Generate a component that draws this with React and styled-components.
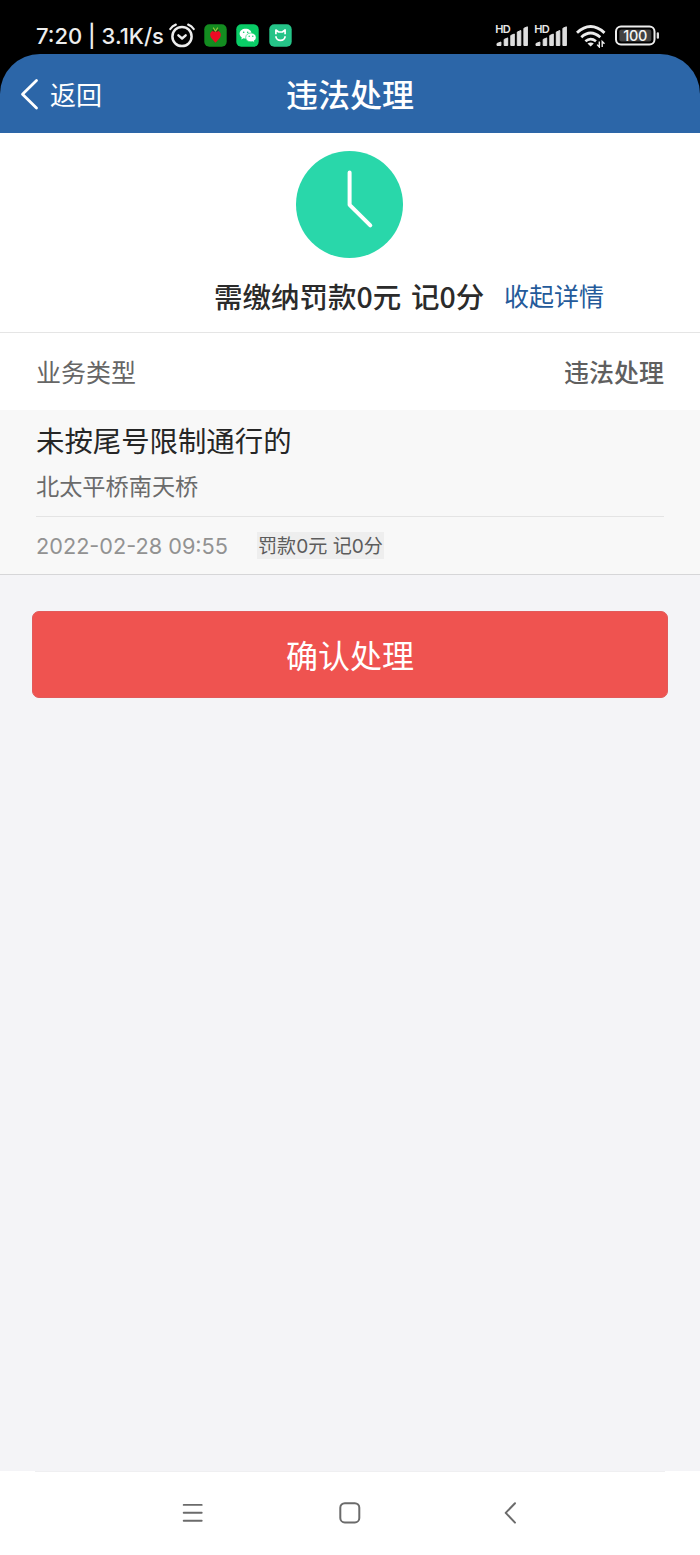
import React from 'react'
import styled, { createGlobalStyle } from 'styled-components'

const ticket = {
  title: '未按尾号限制通行的',
  address: '北太平桥南天桥',
  time: '2022-02-28 09:55',
  penalty: '罚款0元 记0分'
}

const SignalIcon = () => (
  <svg width='33' height='34' viewBox='0 -5 33 34'>
    <text x='0.2' y='9.2' fontSize='11' fontWeight='600' fill='#e8e8e8' textLength='15.4'>
      HD
    </text>
    <g fill='#dedede' stroke='#dedede' strokeWidth='1' strokeLinejoin='round'>
      <path d='M2 21.5v-2l3.9-1.5v3.500z' />
      <path d='M9.200 21.5v-6.100l3.500-1.500v7.600z' />
      <path d='M15.800 21.5v-10l3.500-1.500v11.500z' />
      <path d='M22.300 21.5v-13.500l3.500-1.500v15z' />
      <path d='M28.900 21.5v-17.200l3.500-1.500v18.700z' />
    </g>
  </svg>
)

const AlarmIcon = () => (
  <svg width='26' height='26' viewBox='0 0 26 26' fill='none' stroke='#ededed' strokeLinecap='round'>
    <circle cx='13' cy='13.5' r='9.6' strokeWidth='2.5' />
    <path d='M9.4 12.3l3.7 3.2 3.6-3.2' strokeWidth='2.4' strokeLinejoin='round' />
    <path d='M1.3 6Q3.3 2.9 6.8 1.6M24.7 6Q22.7 2.9 19.2 1.6' strokeWidth='2.2' />
  </svg>
)

const BerryIcon = () => (
  <svg width='23' height='23' viewBox='0 0 23 23'>
    <rect x='0.3' y='0.3' width='22.4' height='22.4' rx='5' fill='#138c20' />
    <path d='M11.5 6.900C8 5.800 5.800 8.500 6.200 11.600c.4 2.900 2.900 4.300 5.300 7.200 2.400-2.900 4.900-4.300 5.300-7.200.4-3.100-1.800-5.800-5.300-4.700z' fill='#ee0a24' />
    <path d='M11.5 7.600c-2.200.3-3.300-.6-3.800-2 1.6-.3 2.8.3 3.8 2zm0 0c2.2.3 3.3-.6 3.8-2-1.6-.3-2.8.3-3.8 2z' fill='#174f14' />
    <path d='M11.5 7.2L9.2 3.6M11.5 7.2l2.3-3.6' stroke='#9bc53c' strokeWidth='1.2' />
  </svg>
)

const ChatIcon = () => (
  <svg width='23' height='23' viewBox='0 0 23 23'>
    <rect x='0.3' y='0.3' width='22.4' height='22.4' rx='5' fill='#09cc66' />
    <path d='M9.6 4.7c-3.4 0-6 2.1-6 4.9 0 1.6.8 3 2.2 3.9l-.5 2 2.2-1.2c.7.2 1.3.3 2.1.3 3.4 0 6-2.2 6-5s-2.6-4.9-6-4.9z' fill='#fff' />
    <circle cx='7.7' cy='8.2' r='.8' fill='#09cc66' />
    <circle cx='11.7' cy='8.2' r='.8' fill='#09cc66' />
    <path d='M15 9c-3 0-5.3 1.9-5.3 4.4s2.3 4.4 5.3 4.4c.6 0 1.1-.1 1.6-.2l1.8 1-.4-1.7c1.3-.8 2.1-2.1 2.1-3.5C20.1 10.9 17.9 9 15 9z' fill='#fff' stroke='#09cc66' strokeWidth='.6' />
    <circle cx='13.2' cy='12.2' r='.7' fill='#09cc66' />
    <circle cx='16.8' cy='12.2' r='.7' fill='#09cc66' />
  </svg>
)

const SmartHomeIcon = () => (
  <svg width='23' height='23' viewBox='0 0 23 23' fill='none' stroke='#fff'>
    <rect x='0.3' y='0.3' width='22.4' height='22.4' rx='5' fill='#25c488' stroke='none' />
    <path d='M6.9 10.3V6l2.8 2h3.6l2.8-2v4.3' strokeWidth='1.7' strokeLinejoin='round' />
    <path d='M6.9 12.2c.1 5.6 9.1 5.6 9.2 0' strokeWidth='1.8' />
  </svg>
)

const WifiIcon = () => (
  <svg width='30' height='24' viewBox='0 0 30 24' fill='none' stroke='#ececec'>
    <path d='M1 8.8Q14.5-3.6 28.5 8.8' strokeWidth='2.9' />
    <path d='M5.3 13.2Q14.5 4.8 24.3 13.2' strokeWidth='2.8' />
    <path d='M9.4 17.2Q14.5 12.9 20 17.2' strokeWidth='2.7' />
    <path d='M11.5 19.6q3.2-2.1 6.3 0l-3.1 3z' fill='#ececec' stroke='none' />
    <path d='M23.3 17.5v5.5l-2.2-2.4M26.2 23v-5.6l2.3 2.4' strokeWidth='1.4' />
  </svg>
)

const BatteryIcon = () => (
  <svg width='45' height='22' viewBox='0 0 45 22'>
    <rect x='1' y='1.5' width='38.5' height='18' rx='5' fill='none' stroke='#ededed' strokeWidth='2' />
    <rect x='4.3' y='4.6' width='32' height='11.9' rx='2' fill='#414141' />
    <rect x='41.7' y='7.3' width='2.3' height='6.5' rx='1.1' fill='#ddd' />
    <text x='20.3' y='15.8' textAnchor='middle' fontSize='14.5' fontWeight='500' fill='#f4f4f4' textLength='24'>
      100
    </text>
  </svg>
)

const ClockIcon = () => (
  <svg width='108' height='108' viewBox='0 0 108 108'>
    <circle cx='53.5' cy='54.5' r='53.5' fill='#29d7aa' />
    <path d='M53.6 22.5v32.3l20.7 20.5' fill='none' stroke='#fff' strokeWidth='4' strokeLinecap='round' strokeLinejoin='round' />
  </svg>
)

const App = () => (
  <>
    <GlobalStyle />
    <Screen>
      <StatusBar>
        <StatusText>7:20 | 3.1K/s</StatusText>
        <AlarmIcon />
        <AppIcons>
          <BerryIcon />
          <ChatIcon />
          <SmartHomeIcon />
        </AppIcons>
        <Connectivity>
          <Signals>
            <SignalIcon />
            <SignalIcon />
          </Signals>
          <WifiIcon />
          <BatteryIcon />
        </Connectivity>
      </StatusBar>

      <Header>
        <BackButton>
          <svg width='19' height='32' viewBox='0 0 19 32' fill='none' stroke='#fff'>
            <path d='M16.5 2.5L2.5 16.2l14 13.8' strokeWidth='2.8' strokeLinecap='round' strokeLinejoin='round' />
          </svg>
          返回
        </BackButton>
        <Title>违法处理</Title>
      </Header>

      <Summary>
        <ClockIcon />
        <SummaryLine>
          <Amount>需缴纳罚款0元 记0分</Amount>
          <Toggle>收起详情</Toggle>
        </SummaryLine>
      </Summary>

      <TypeRow>
        <span>业务类型</span>
        <TypeValue>违法处理</TypeValue>
      </TypeRow>

      <Detail>
        <Offence>{ticket.title}</Offence>
        <Address>{ticket.address}</Address>
        <Meta>
          <Time>{ticket.time}</Time>
          <Tag>{ticket.penalty}</Tag>
        </Meta>
      </Detail>

      <Confirm>确认处理</Confirm>

      <NavBar>
        <svg width='22' height='22' viewBox='0 0 22 22' stroke='#6b6b6b' strokeWidth='1.9' strokeLinecap='round'>
          <path d='M1.7 2.9h18M1.7 10.8h18M1.7 18.7h18' />
        </svg>
        <svg width='22' height='22' viewBox='0 0 22 22' fill='none' stroke='#6b6b6b' strokeWidth='2'>
          <rect x='1.3' y='1.2' width='19' height='19.2' rx='4.5' />
        </svg>
        <svg width='30' height='22' viewBox='-8 0 30 22' fill='none' stroke='#6b6b6b' strokeWidth='2'>
          <path d='M11 1.2L1.7 10.9l9.3 9.7' strokeLinecap='round' strokeLinejoin='round' />
        </svg>
      </NavBar>
    </Screen>
  </>
)

export default App

const GlobalStyle = createGlobalStyle`
  * {
    box-sizing: border-box;
  }
  body {
    margin: 0;
    background: #f4f4f7;
    font-family: Inter, 'Noto Sans CJK SC', sans-serif;
  }
  svg {
    display: block;
    flex: none;
  }
`

const Screen = styled.div`
  display: flex;
  flex-direction: column;
  width: 700px;
  height: 1555px;
  overflow: hidden;
  background: linear-gradient(#000 110px, #f4f4f7 110px);
  white-space: nowrap;
`

const StatusBar = styled.div`
  display: flex;
  align-items: center;
  height: 54px;
  padding: 18px 40px 0 36px;
  color: #ededed;
`

const StatusText = styled.div`
  width: 133px;
  font-size: 22px;
  font-weight: 500;
  line-height: 36px;
`

const AppIcons = styled.div`
  display: flex;
  gap: 9.5px;
  margin: 0 0 1px 8.5px;
`

const Connectivity = styled.div`
  display: flex;
  align-items: center;
  margin-left: auto;
  gap: 9px;
`

const Signals = styled.div`
  display: flex;
  gap: 6px;
`

const Header = styled.header`
  display: grid;
  grid-template-columns: 1fr auto 1fr;
  align-items: center;
  height: 79px;
  padding: 0 20px;
  border-radius: 40px 40px 0 0;
  background: #2c66a8;
  color: #fff;
`

const BackButton = styled.div`
  display: flex;
  align-items: center;
  gap: 11px;
  font-size: 26px;
`

const Title = styled.h1`
  margin: 0;
  padding-top: 5px;
  font-size: 32px;
  font-weight: 500;
  line-height: 40px;
`

const Summary = styled.section`
  display: flex;
  flex-direction: column;
  align-items: center;
  height: 200px;
  padding-top: 17px;
  border-bottom: 1px solid #e5e5e5;
  background: #fff;
`

const SummaryLine = styled.div`
  display: flex;
  align-items: center;
  align-self: flex-start;
  gap: 20px;
  margin: 19px 0 0 214px;
  line-height: 40px;
`

const Amount = styled.strong`
  width: 270px;
  padding-bottom: 3px;
  color: #2b2b2b;
  font-family: 'Noto Sans CJK SC', sans-serif;
  font-size: 28.5px;
  font-weight: 500;
  line-height: 37px;
  word-spacing: 3.4px;
`

const Toggle = styled.span`
  color: #245a9a;
  font-size: 25px;
`

const TypeRow = styled.div`
  display: flex;
  justify-content: space-between;
  height: 77px;
  padding: 0 36px;
  background: #fff;
  color: #666;
  font-size: 25px;
  line-height: 80px;
`

const TypeValue = styled.span`
  color: #5f5f5f;
  font-weight: 500;
`

const Detail = styled.section`
  height: 165px;
  padding: 11px 36px 0;
  border-bottom: 1px solid #d6d6d8;
  background: #f8f8f8;
`

const Offence = styled.div`
  color: #262626;
  font-size: 28.4px;
  line-height: 42px;
`

const Address = styled.div`
  height: 54px;
  border-bottom: 1px solid #e4e4e4;
  color: #6b6b6b;
  font-size: 23.2px;
  line-height: 48px;
`

const Meta = styled.div`
  display: flex;
  align-items: center;
  height: 57px;
`

const Time = styled.span`
  width: 221px;
  color: #929292;
  font-size: 21.7px;
`

const Tag = styled.span`
  padding: 1px 1px 0;
  background: #eee;
  color: #5c5c5c;
  font-size: 19.1px;
  line-height: 26px;
`

const Confirm = styled.button`
  height: 87px;
  margin: 36px 32px 0;
  padding: 0 0 2px;
  border: 1px solid #e25a5a;
  border-radius: 7px;
  background: #ef5350;
  color: #fff;
  font-family: inherit;
  font-size: 32px;
`

const NavBar = styled.nav`
  position: relative;
  display: flex;
  align-items: center;
  height: 84px;
  margin-top: auto;
  padding-left: 182px;
  gap: 135px;
  background: #fff;
  /* rounded page edge peeking over the bar */
  &::before {
    content: '';
    position: absolute;
    top: 0;
    left: 35px;
    right: 35px;
    height: 1px;
    background: #efeff1;
  }
`
